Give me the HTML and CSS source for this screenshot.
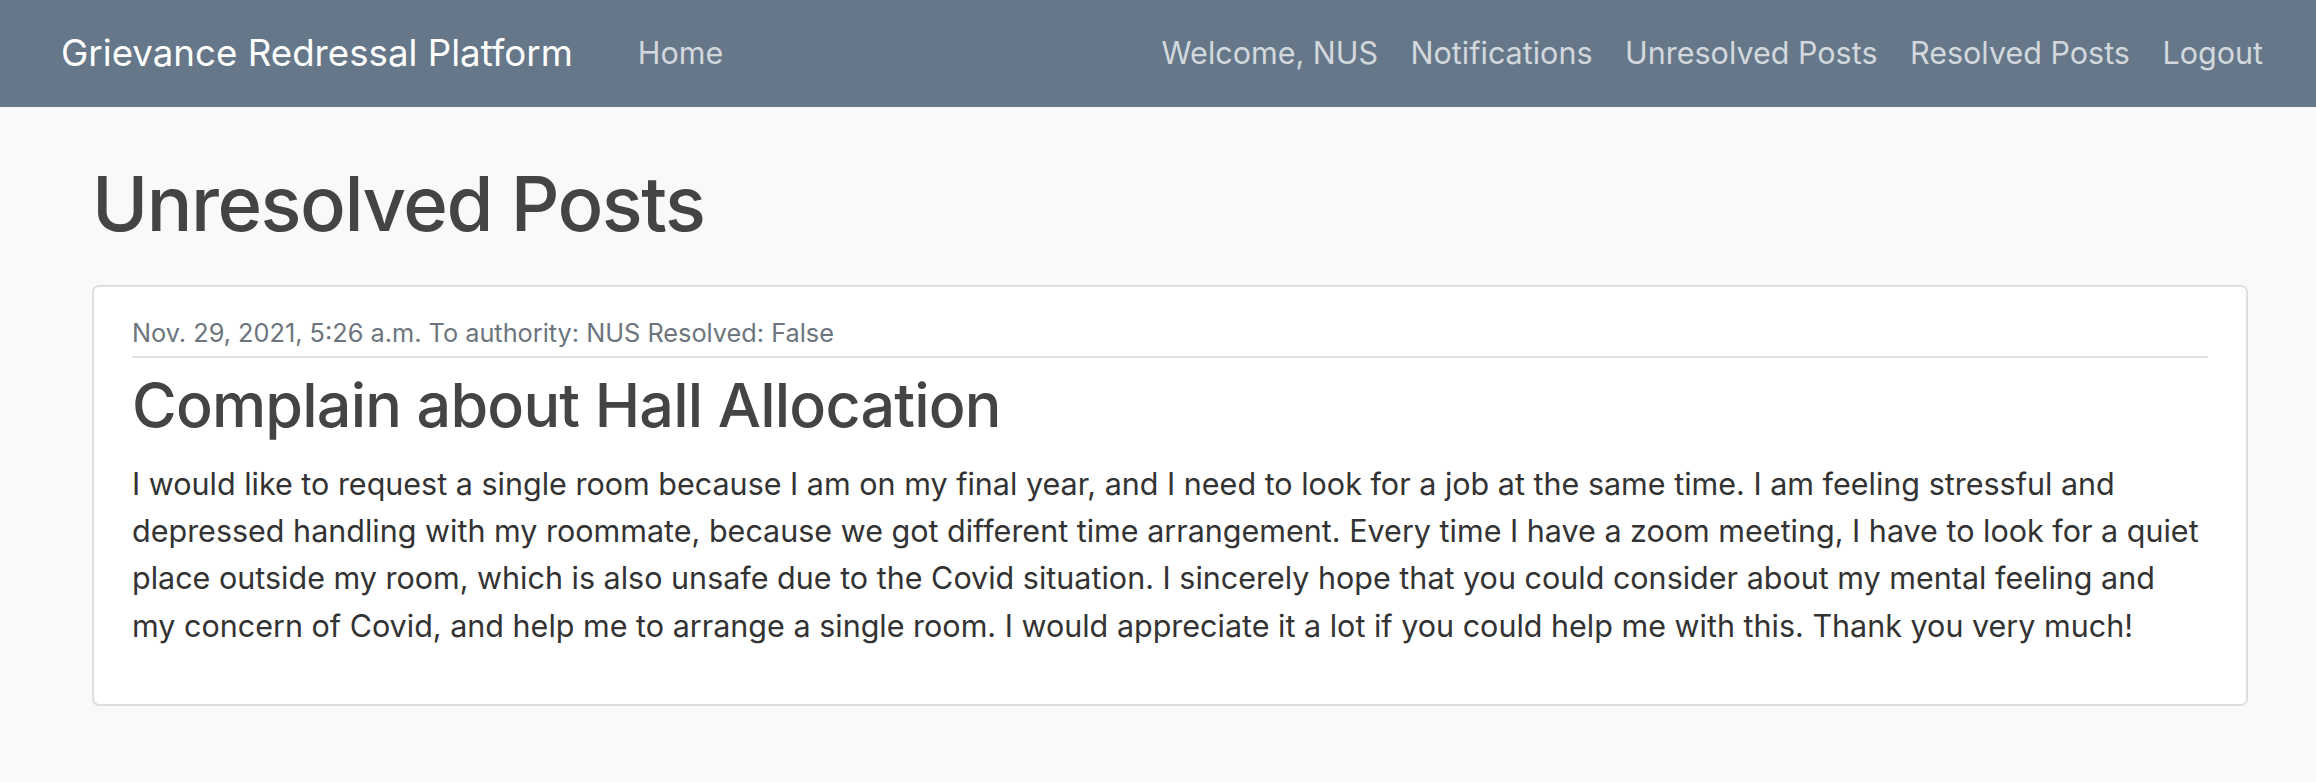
FILE: index.html
```html
<!DOCTYPE html>
<html lang="en">
<head>
<meta charset="utf-8">
<title>Unresolved Posts</title>
<link rel="stylesheet" href="styles.css">
</head>
<body>
<nav class="navbar">
  <a class="brand" href="#">Grievance Redressal Platform</a>
  <ul class="nav-left">
    <li><a class="nav-link" href="#">Home</a></li>
  </ul>
  <ul class="nav-right">
    <li><a class="nav-link" href="#">Welcome, NUS</a></li>
    <li><a class="nav-link" href="#">Notifications</a></li>
    <li><a class="nav-link" href="#">Unresolved Posts</a></li>
    <li><a class="nav-link" href="#">Resolved Posts</a></li>
    <li><a class="nav-link" href="#">Logout</a></li>
  </ul>
</nav>
<main class="content">
  <h1 class="page-title">Unresolved Posts</h1>
  <article class="post-card">
    <div class="post-meta">Nov. 29, 2021, 5:26 a.m. To authority: NUS Resolved: False</div>
    <hr class="divider">
    <h2 class="post-title">Complain about Hall Allocation</h2>
    <p class="post-body">I would like to request a single room because I am on my final year, and I need to look for a job at the same time. I am feeling stressful and depressed handling with my roommate, because we got different time arrangement. Every time I have a zoom meeting, I have to look for a quiet place outside my room, which is also unsafe due to the Covid situation. I sincerely hope that you could consider about my mental feeling and my&nbsp;concern of Covid, and help me to arrange a single room. I would appreciate it a lot if you could help me with this. Thank you very much!</p>
  </article>
</main>
</body>
</html>
```
FILE: styles.css
```css
* { box-sizing: border-box; }
html, body { margin: 0; padding: 0; }
body {
  background: #f9f9f9;
  font-family: Inter, "Noto Sans", sans-serif;
  color: #333;
}
a { text-decoration: none; }
ul { list-style: none; margin: 0; padding: 0; }

.navbar {
  height: 107px;
  background: #657789;
  display: flex;
  align-items: center;
  padding: 0 53px 0 61px;
}
.brand {
  color: #ffffff;
  font-size: 36.7px;
  line-height: 1;
  margin-right: 49px;
}
.nav-left, .nav-right {
  display: flex;
  align-items: center;
  gap: 32.5px;
}
.nav-left { padding-left: 16px; }
.nav-right { margin-left: auto; }
.nav-link {
  color: #d3d8dd;
  font-size: 30.5px;
  line-height: 1;
}

.content {
  margin: 0 68px 0 92px;
  padding-top: 51px;
}
.page-title {
  margin: 0 0 36px;
  font-size: 76px;
  font-weight: 500;
  letter-spacing: -1.5px;
  line-height: 1.2;
  color: #444;
}
.post-card {
  background: #fff;
  border: 2px solid #dedede;
  border-radius: 7px;
  padding: 27px 38px 28px;
}
.post-meta {
  font-size: 25.3px;
  line-height: 1.5;
  color: #6c757d;
}
.divider {
  margin: 4px 0 0;
  border: 0;
  border-top: 2px solid #e2e2e2;
}
.post-title {
  margin: 10.5px 0 18px;
  font-size: 61px;
  font-weight: 500;
  letter-spacing: -0.8px;
  line-height: 1.2;
  color: #444;
}
.post-body {
  margin: 0 0 27px;
  font-size: 30.5px;
  line-height: 1.55;
  color: #333;
}
```
